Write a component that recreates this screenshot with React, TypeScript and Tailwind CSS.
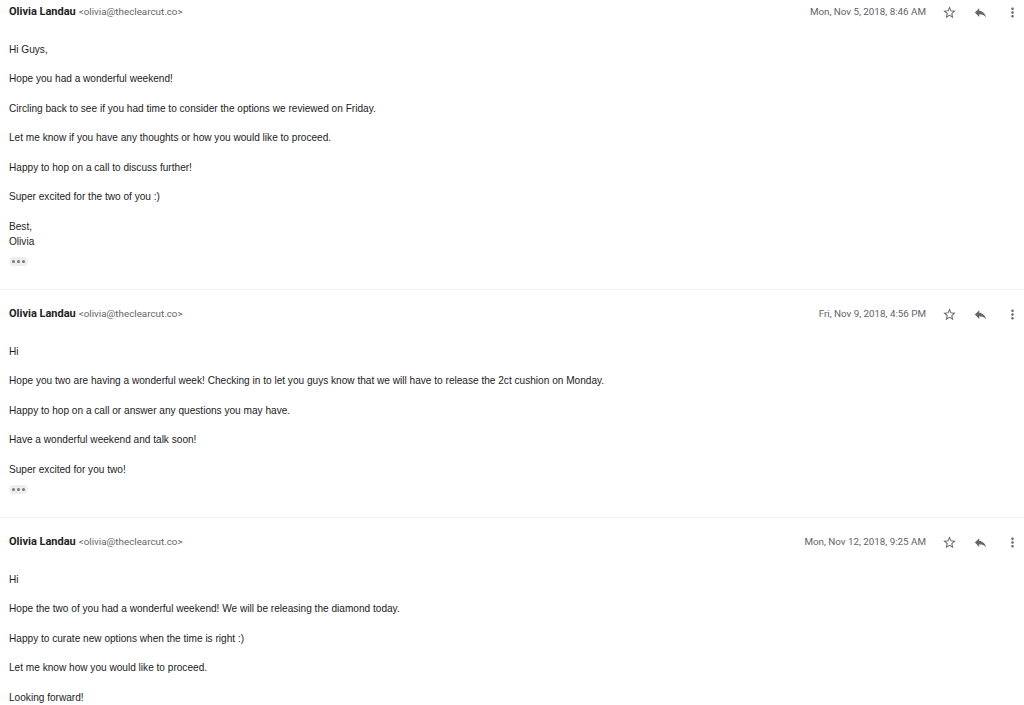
import type { ReactNode } from 'react'

type Message = {
  date: string
  paragraphs: ReactNode[]
  trimmed?: boolean
  first?: boolean
}

const MESSAGES: Message[] = [
  {
    date: 'Mon, Nov 5, 2018, 8:46 AM',
    first: true,
    trimmed: true,
    paragraphs: [
      'Hi Guys,',
      'Hope you had a wonderful weekend!',
      'Circling back to see if you had time to consider the options we reviewed on Friday.',
      'Let me know if you have any thoughts or how you would like to proceed.',
      'Happy to hop on a call to discuss further!',
      'Super excited for the two of you :)',
      <>
        Best,
        <br />
        Olivia
      </>,
    ],
  },
  {
    date: 'Fri, Nov 9, 2018, 4:56 PM',
    trimmed: true,
    paragraphs: [
      'Hi',
      'Hope you two are having a wonderful week! Checking in to let you guys know that we will have to release the 2ct cushion on Monday.',
      'Happy to hop on a call or answer any questions you may have.',
      'Have a wonderful weekend and talk soon!',
      'Super excited for you two!',
    ],
  },
  {
    date: 'Mon, Nov 12, 2018, 9:25 AM',
    paragraphs: [
      'Hi',
      'Hope the two of you had a wonderful weekend! We will be releasing the diamond today.',
      'Happy to curate new options when the time is right :)',
      'Let me know how you would like to proceed.',
      'Looking forward!',
    ],
  },
]

function StarIcon() {
  return (
    <svg viewBox="0 0 24 24" className="h-[15px] w-[15px] fill-[#666666]">
      <path d="M22 9.24l-7.19-.62L12 2 9.19 8.63 2 9.24l5.46 4.73L5.82 21 12 17.27 18.18 21l-1.63-7.03L22 9.24zM12 15.4l-3.76 2.27 1-4.28-3.32-2.88 4.38-.38L12 6.1l1.71 4.04 4.38.38-3.32 2.88 1 4.28L12 15.4z" />
    </svg>
  )
}

function ReplyIcon() {
  return (
    <svg viewBox="0 0 24 24" className="h-[15px] w-[15px] fill-[#666666]">
      <path d="M10 9V5l-7 7 7 7v-4.1c5 0 8.5 1.6 11 5.1-1-5-4-10-11-11z" />
    </svg>
  )
}

function MoreIcon() {
  return (
    <svg viewBox="0 0 24 24" className="h-[15px] w-[15px] fill-[#666666]">
      <path d="M12 8c1.1 0 2-.9 2-2s-.9-2-2-2-2 .9-2 2 .9 2 2 2zm0 2c-1.1 0-2 .9-2 2s.9 2 2 2 2-.9 2-2-.9-2-2-2zm0 6c-1.1 0-2 .9-2 2s.9 2 2 2 2-.9 2-2-.9-2-2-2z" />
    </svg>
  )
}

function MessageCard({ msg }: { msg: Message }) {
  return (
    <div className={`border-b border-[#f1f1f1] pb-[23px] ${msg.first ? '' : 'pt-[12px]'}`}>
      {/* header row */}
      <div className="flex h-[24px] items-center pl-[9px] pr-[2px]">
        <span className="font-['Roboto',sans-serif] text-[11px] font-bold text-[#222222]">Olivia Landau</span>
        <span className="ml-[3px] font-['Roboto',sans-serif] text-[9.8px] text-[#666666]">&lt;olivia@theclearcut.co&gt;</span>
        <span className="ml-auto font-['Roboto',sans-serif] text-[9.8px] text-[#5f6368]">{msg.date}</span>
        <div className="ml-[13px] flex items-center">
          <button className="flex h-[24px] w-[20px] items-center justify-center"><StarIcon /></button>
          <button className="ml-[11px] flex h-[24px] w-[20px] items-center justify-center"><ReplyIcon /></button>
          <button className="ml-[12px] flex h-[24px] w-[20px] items-center justify-center"><MoreIcon /></button>
        </div>
      </div>

      {/* body */}
      <div className="pl-[9px] pt-[17.5px] font-['Liberation_Sans',Arial,sans-serif] text-[10.1px] leading-[15px] text-[#222222]">
        {msg.paragraphs.map((p, i) => (
          <p key={i} className={i === msg.paragraphs.length - 1 ? '' : 'mb-[14.5px]'}>
            {p}
          </p>
        ))}
        {msg.trimmed && (
          <div className="mt-[8.5px] flex h-[9px] w-[19px] items-center justify-center gap-[2px] rounded-[5px] bg-[#eeeeee]">
            <span className="h-[3px] w-[3px] rounded-full bg-[#777777]" />
            <span className="h-[3px] w-[3px] rounded-full bg-[#777777]" />
            <span className="h-[3px] w-[3px] rounded-full bg-[#777777]" />
          </div>
        )}
      </div>
    </div>
  )
}

export default function App() {
  return (
    <div className="h-[705px] w-[1024px] overflow-hidden bg-white">
      {MESSAGES.map((m, i) => (
        <MessageCard key={i} msg={m} />
      ))}
    </div>
  )
}
